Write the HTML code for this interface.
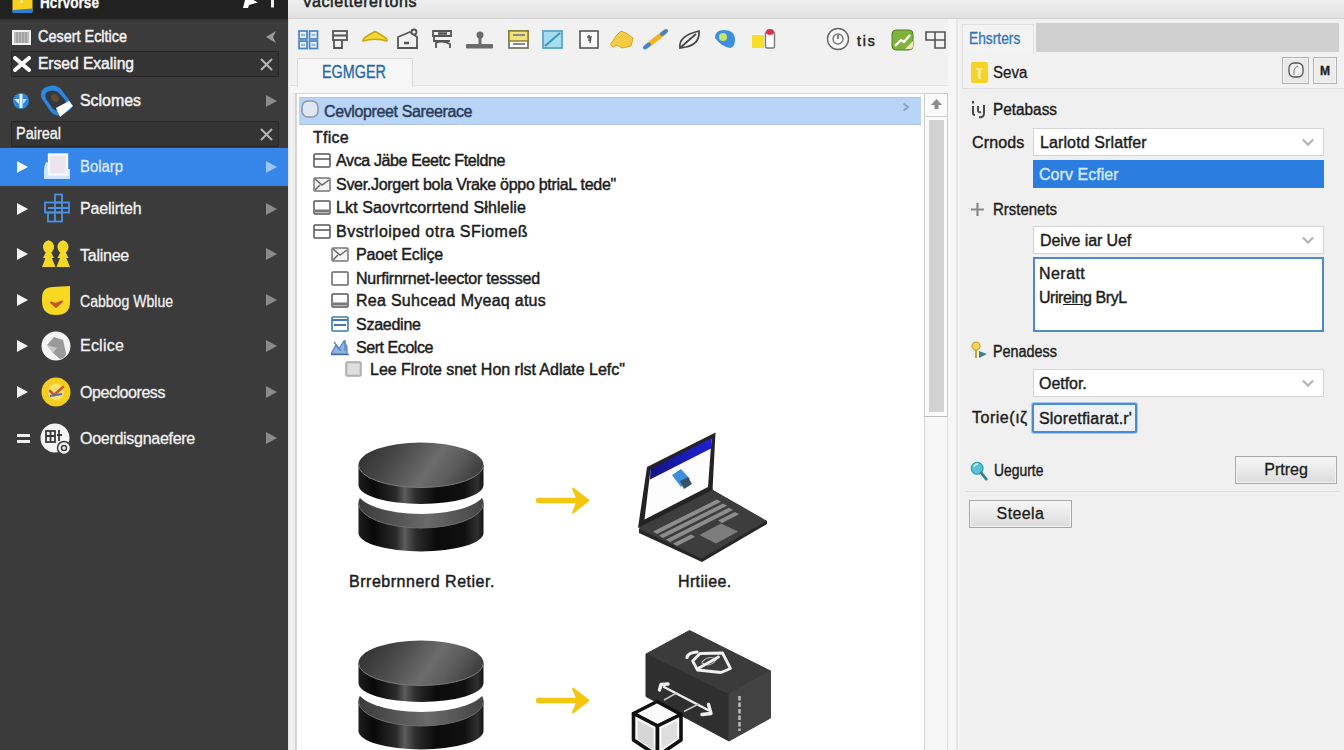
<!DOCTYPE html>
<html lang="en">
<head>
<meta charset="utf-8">
<title>Vacletterertons</title>
<style>
*{box-sizing:border-box;margin:0;padding:0}
html,body{width:1344px;height:750px;overflow:hidden;background:#f0f0f0}
body{font-family:"Liberation Sans",sans-serif;font-size:15px;color:#1a1a1a;position:relative}
.abs{position:absolute}
.t{position:absolute;white-space:nowrap;line-height:20px;height:20px}
/* ---------- sidebar ---------- */
#side{position:absolute;left:0;top:0;width:288px;height:750px;background:#3b3b3b;overflow:hidden}
#side .top{position:absolute;left:0;top:0;width:288px;height:21px;background:linear-gradient(#212121 0,#212121 18px,#3b3b3b 21px)}
#side .t{color:#f2f2f2;font-size:15px}
#side .box{position:absolute;left:11px;width:268px;height:26px;background:#343434;border:1px solid #262626;border-radius:1px}
#side .sel{position:absolute;left:0;top:148px;width:288px;height:38px;background:#3685e9}
.tri{position:absolute;width:0;height:0;border-style:solid;border-width:6px 0 6px 11px;border-color:transparent transparent transparent #8a8a8a}
.tri.w{border-left-color:#f4f4f4}
/* ---------- center ---------- */
#mid{position:absolute;left:288px;top:0;width:670px;height:750px;background:#f1f1f1;overflow:hidden}
#mid .title{position:absolute;left:0;top:0;width:670px;height:18px;background:linear-gradient(#eeeeee,#e1e1e1)}
#panel{position:absolute;left:9px;top:93px;width:629px;height:670px;background:#fff;border:1px solid #d6d6d6;border-left:1px solid #fff}
#panelL{position:absolute;left:7px;top:93px;width:3px;height:670px;background:linear-gradient(90deg,#d0d0d0,#d8d8d8 55%,#f2f2f2);border-top:1px solid #d0d0d0}
.tree .t{font-size:15px;color:#1c1c1c}
.ico{position:absolute;width:17px;height:13px;border:1.5px solid #4a4a4a;border-radius:1px;background:#fff}
.ico:after{content:"";position:absolute;left:0;right:0;top:4px;border-top:1.5px solid #4a4a4a}
/* ---------- right ---------- */
#right{position:absolute;left:958px;top:0;width:386px;height:750px;background:#f0f0f0}
#right .t{font-size:15px;color:#1c1c1c}
.selbox{position:absolute;left:75px;width:291px;height:28px;background:#fff;border:1px solid #d4d4d4}
.chev{position:absolute;right:9px;top:9px;width:12px;height:8px}
.btn{position:absolute;height:28px;border:1px solid #a9a9a9;background:linear-gradient(#f7f7f7,#dcdcdc);text-align:center;line-height:26px;font-size:16px;color:#1c1c1c;-webkit-text-stroke:0.3px #1c1c1c;box-shadow:inset 0 0 0 1px #f4f4f4}
</style>
</head>
<body>

<!-- ================= LEFT SIDEBAR ================= -->
<div id="side">
  <div class="top"></div>
  <!-- top bar: app icon + title -->
  <svg class="abs" style="left:12px;top:0" width="21" height="14" viewBox="0 0 21 14"><rect x="0.5" y="-6" width="20" height="19" rx="2" fill="#f6d21c"/><path d="M0.5 10 L20.5 8.5 L20.5 12 Q20.5 13 19.5 13 L1.5 13 Q0.5 13 0.5 12Z" fill="#2f7fd6"/><rect x="8" y="-2" width="3" height="5" fill="#fbe67a"/></svg>
  <div class="t" style="left:40.0px;top:-7px;font-size:16px;font-weight:bold;color:#fff;letter-spacing:0px;-webkit-text-stroke:0.3px #f2f2f2;transform:scaleX(0.850);transform-origin:0 50%">Hcrvorse</div>
  <svg class="abs" style="left:243px;top:0" width="36" height="12" viewBox="0 0 36 12"><path d="M0 8 L3 -4 L15 2.5 L6 5 L5 8Z" fill="#fff"/><rect x="28" y="-4" width="3" height="11.5" fill="#ededed"/></svg>

  <!-- row: Cesert Ecltice -->
  <svg class="abs" style="left:12px;top:30px" width="19" height="15" viewBox="0 0 19 15"><rect x="1" y="1" width="17" height="13" fill="#bdbdbd" stroke="#f2f2f2" stroke-width="2"/><path d="M5 2V13M8 2V13M11 2V13M14 2V13" stroke="#8a8a8a" stroke-width="1"/></svg>
  <div class="t" style="left:38.0px;top:27px;-webkit-text-stroke:0.5px #f2f2f2;letter-spacing:0px;font-size:16px;transform:scaleX(0.902);transform-origin:0 50%">Cesert Ecltice</div>
  <svg class="abs" style="left:264px;top:30px" width="14" height="14" viewBox="0 0 14 14"><path d="M12 1 L2 7 L12 13 L9 7Z" fill="#9a9a9a"/></svg>

  <!-- boxed row: Ersed Exaling -->
  <div class="box" style="top:51px"></div>
  <svg class="abs" style="left:13px;top:56px" width="18" height="16" viewBox="0 0 18 16"><path d="M2 2 L16 14 M16 2 L2 14" stroke="#fff" stroke-width="4" stroke-linecap="round"/></svg>
  <div class="t" style="left:38.0px;top:54px;-webkit-text-stroke:0.5px #f2f2f2;letter-spacing:0px;font-size:16px;transform:scaleX(0.972);transform-origin:0 50%">Ersed Exaling</div>
  <svg class="abs" style="left:259px;top:57px" width="15" height="15" viewBox="0 0 15 15"><path d="M2 2 L13 13 M13 2 L2 13" stroke="#b5b5b5" stroke-width="2"/></svg>

  <!-- row: Sclomes -->
  <svg class="abs" style="left:11px;top:84px" width="64" height="34" viewBox="0 0 64 34"><circle cx="10" cy="17" r="8" fill="#2d86d9"/><rect x="8.5" y="10" width="3" height="14" fill="#e8f3ff"/><path d="M3 15 L8 15 L8 20Z" fill="#e8f3ff"/><path d="M16 15 L12 15 L12 20Z" fill="#bfe0ff"/>
   <path d="M33 4 Q28 8 31 15 L40 28 Q46 34 53 30 L60 25 Q62 21 59 17 L49 4 Q42 -1 33 4Z" fill="#2d86e0"/><path d="M36 8 Q33 11 35 15 L42 25 Q46 28 50 26 L55 22 Q56 19 54 16 L47 8 Q42 5 36 8Z" fill="#33383f"/><ellipse cx="44" cy="14" rx="4.5" ry="3.5" transform="rotate(38 44 14)" fill="#5e4a36"/><path d="M45 24 L58 17 L62 22 L49 33Z" fill="#fff"/></svg>
  <div class="t" style="left:80.0px;top:91px;-webkit-text-stroke:0.5px #f2f2f2;font-size:16px;letter-spacing:0px;transform:scaleX(0.994);transform-origin:0 50%">Sclomes</div>
  <div class="tri" style="left:266px;top:95px"></div>

  <!-- boxed row: Paireal -->
  <div class="box" style="top:121px"></div>
  <div class="t" style="left:16.0px;top:124px;font-size:16px;letter-spacing:0px;-webkit-text-stroke:0.35px #f2f2f2;transform:scaleX(0.903);transform-origin:0 50%">Paireal</div>
  <svg class="abs" style="left:259px;top:127px" width="15" height="15" viewBox="0 0 15 15"><path d="M2 2 L13 13 M13 2 L2 13" stroke="#b5b5b5" stroke-width="2"/></svg>

  <!-- selected row: Bolarp -->
  <div class="sel"></div>
  <div class="tri w" style="left:17px;top:161px"></div>
  <svg class="abs" style="left:42px;top:152px" width="30" height="30" viewBox="0 0 30 30"><path d="M4 10 Q2 14 2 18 V27 H28 V17 H24" fill="#cfe5ff"/><rect x="7" y="2.5" width="18" height="20" fill="#ece6ec" stroke="#f4f9ff" stroke-width="2.4"/></svg>
  <div class="t" style="left:80.0px;top:157px;color:#dce9fb;font-size:16px;letter-spacing:0px;-webkit-text-stroke:0.3px #dce9fb;transform:scaleX(0.930);transform-origin:0 50%">Bolarp</div>
  <div class="tri" style="left:266px;top:161px;border-left-color:#9cc4f4"></div>

  <!-- row: Paelirteh -->
  <div class="tri w" style="left:17px;top:203px"></div>
  <svg class="abs" style="left:42px;top:193px" width="30" height="32" viewBox="0 0 30 32"><g fill="none" stroke="#4a93e6" stroke-width="1.8"><rect x="13" y="1.5" width="7" height="8"/><rect x="3" y="9.5" width="24" height="10"/><rect x="6" y="19.5" width="14" height="9"/><path d="M13 9.5V28.5M20 9.5V19.5M6 15H27"/></g></svg>
  <div class="t" style="left:80.0px;top:199px;font-size:16px;letter-spacing:-0.18px;-webkit-text-stroke:0.3px #f2f2f2">Paelirteh</div>
  <div class="tri" style="left:266px;top:203px"></div>

  <!-- row: Talinee -->
  <div class="tri w" style="left:17px;top:248px"></div>
  <svg class="abs" style="left:40px;top:240px" width="32" height="30" viewBox="0 0 32 30"><g fill="#f7d826"><ellipse cx="8.5" cy="7" rx="5.5" ry="6.5"/><ellipse cx="23" cy="7" rx="5.5" ry="6.5"/><path d="M8.5 0L12 5H5Z"/><path d="M23 0L26.5 5H19.5Z"/><path d="M8.5 10 L2 27 L15.5 27Z"/><path d="M23 10 L16.5 27 L30 27Z"/><path d="M6 12H11L14 18H3Z"/><path d="M20.5 12H25.5L28.5 18H17.5Z"/></g></svg>
  <div class="t" style="left:80.0px;top:245.5px;font-size:16px;letter-spacing:-0.24px;-webkit-text-stroke:0.3px #f2f2f2">Talinee</div>
  <div class="tri" style="left:266px;top:248px"></div>

  <!-- row: Cabbog Wblue -->
  <div class="tri w" style="left:17px;top:294px"></div>
  <svg class="abs" style="left:41px;top:285px" width="31" height="31" viewBox="0 0 31 31"><path d="M1 13 Q1 2 12 2 L29 1 L29 17 Q29 30 15 30 Q1 30 1 16Z" fill="#f8d820"/><path d="M10 17.5 L15 22 L21 16.5 L15 19Z" fill="#c8542a" stroke="#c8542a" stroke-width="2" stroke-linejoin="round"/></svg>
  <div class="t" style="left:80.0px;top:291.5px;font-size:16px;letter-spacing:0px;-webkit-text-stroke:0.3px #f2f2f2;transform:scaleX(0.879);transform-origin:0 50%">Cabbog Wblue</div>
  <div class="tri" style="left:266px;top:294px"></div>

  <!-- row: Eclice -->
  <div class="tri w" style="left:17px;top:340px"></div>
  <svg class="abs" style="left:41px;top:331px" width="31" height="31" viewBox="0 0 31 31"><circle cx="15" cy="15" r="14.5" fill="#f4f4f4"/><path d="M6 14 L13 6 L22 9 L25 22 Q25 27 19 28 L12 22Z" fill="#9a9a9a"/><path d="M6 14 L12 22 L16 17Z" fill="#c9c9c9"/></svg>
  <div class="t" style="left:80.0px;top:335.5px;font-size:16px;letter-spacing:0.22px;-webkit-text-stroke:0.3px #f2f2f2">Eclice</div>
  <div class="tri" style="left:266px;top:340px"></div>

  <!-- row: Opeclooress -->
  <div class="tri w" style="left:17px;top:386px"></div>
  <svg class="abs" style="left:41px;top:377px" width="31" height="31" viewBox="0 0 31 31"><circle cx="15" cy="15" r="14.5" fill="#f4cf1f"/><circle cx="15" cy="15" r="8" fill="#f9e173"/><path d="M9 14 L13 18 L22 10" fill="none" stroke="#d4552f" stroke-width="2.6" stroke-linecap="round"/><path d="M9 19 L21 17" stroke="#5b6fb0" stroke-width="2.2"/></svg>
  <div class="t" style="left:80.0px;top:382.5px;font-size:16px;letter-spacing:-0.44px;-webkit-text-stroke:0.3px #f2f2f2">Opeclooress</div>
  <div class="tri" style="left:266px;top:386px"></div>

  <!-- row: Ooerdisgnaefere -->
  <div class="abs" style="left:17px;top:434px;width:13px;height:3px;background:#f2f2f2"></div>
  <div class="abs" style="left:17px;top:440px;width:13px;height:3px;background:#f2f2f2"></div>
  <svg class="abs" style="left:40px;top:422px" width="34" height="36" viewBox="0 0 34 36"><circle cx="15" cy="16" r="14.5" fill="#f4f4f4"/><g fill="none" stroke="#3a3a3a" stroke-width="1.8"><rect x="6" y="9" width="9" height="11"/><path d="M6 14H15M10.5 9V20M19 8V19M17 13H22"/></g><circle cx="24" cy="26" r="6.5" fill="#f4f4f4" stroke="#3c3c3c" stroke-width="1.5"/><circle cx="24" cy="26" r="2.5" fill="none" stroke="#3a3a3a" stroke-width="1.5"/></svg>
  <div class="t" style="left:80.0px;top:428.5px;font-size:16px;letter-spacing:-0.28px;-webkit-text-stroke:0.3px #f2f2f2">Ooerdisgnaefere</div>
  <div class="tri" style="left:266px;top:432px"></div>
</div>

<!-- ================= CENTER ================= -->
<div id="mid">
  <div class="title"></div>
  <div class="abs" style="left:0;top:18px;width:670px;height:1px;background:#d2d2d2"></div>
  <div class="abs" style="left:0;top:19px;width:1px;height:731px;background:#e4e4e4"></div>
  <div class="t" style="left:14.0px;top:-8px;font-size:16px;letter-spacing:0.57px;color:#222;-webkit-text-stroke:0.5px #222">Vacletterertons</div>

  <!-- toolbar icons (coordinates relative to #mid: x-288) -->
  <svg class="abs" style="left:0;top:24px" width="670" height="32" viewBox="288 24 670 32">
    <!-- 1 grid -->
    <g fill="#e6eff9" stroke="#4785c6" stroke-width="1.7"><rect x="299" y="31" width="8" height="8"/><rect x="309.5" y="31" width="8" height="8"/><rect x="299" y="41" width="8" height="7.5"/><rect x="309.5" y="41" width="8" height="7.5"/></g><path d="M301 35h4M311.5 35h4M301 45h4M311.5 45h4" stroke="#7aa6d6" stroke-width="1.5"/>
    <!-- 2 list -->
    <g fill="none" stroke="#555" stroke-width="1.8"><rect x="333" y="31" width="14" height="9"/><path d="M333 35.5H347M334 40V48H342V40"/></g>
    <!-- 3 yellow hat -->
    <path d="M363 41 Q362 38 375 31.5 Q388 38 387 41 Q375 37.5 363 41Z" fill="#f6d82e" stroke="#c8a616" stroke-width="1.6" stroke-linejoin="round"/>
    <!-- 4 house -->
    <g fill="none" stroke="#555" stroke-width="1.8"><path d="M398 48V37L410 32L417 37V48Z"/><circle cx="414" cy="32" r="2.5" fill="#f1f1f1"/><path d="M404 43H409" stroke-width="2.5"/></g>
    <!-- 5 building -->
    <g fill="none" stroke="#555" stroke-width="1.8"><path d="M433 36V31H451V36ZM434 36V41H450M436 48V43Q442 40 450 44V48"/><path d="M438 33.5H447" stroke-width="2.5"/></g>
    <!-- 6 stamp -->
    <g fill="#6a6a6a"><circle cx="480" cy="35" r="3.5"/><rect x="478.5" y="36" width="3" height="8"/><rect x="466" y="44" width="27" height="4.5" rx="1"/></g>
    <!-- 7 yellow table -->
    <g><rect x="509" y="31" width="19" height="17" fill="#fff" stroke="#6a6a55" stroke-width="1.6"/><rect x="509" y="31" width="19" height="10" fill="#f3e27a" stroke="#8a7d2a" stroke-width="1.4"/><path d="M513 35H525M513 44H525" stroke="#8a8a8a" stroke-width="2"/></g>
    <!-- 8 cyan square -->
    <g><rect x="543" y="31" width="19" height="17" fill="#a6def0" stroke="#5aa7c4" stroke-width="1.8"/><path d="M545 46L560 33" stroke="#3d93b5" stroke-width="2"/></g>
    <!-- 9 small box -->
    <g><rect x="580" y="31" width="18" height="17" fill="#fafafa" stroke="#555" stroke-width="1.6"/><path d="M587 37h4l-1 6M589 35v6" stroke="#555" stroke-width="1.4" fill="none"/></g>
    <!-- 10 yellow blob -->
    <path d="M612 42 Q609 45 613 47 L617 45 L622 48 L631 46 L633 38 L626 33 L621 31 L616 36Z" fill="#f6cc45" stroke="#d9a520" stroke-width="1"/>
    <!-- 11 pen -->
    <g><path d="M647 46L665 32" stroke="#f0b429" stroke-width="5" stroke-linecap="round"/><path d="M645 47.5L649 44.5" stroke="#3e86c9" stroke-width="4" stroke-linecap="round"/><path d="M662 34L666 31" stroke="#3e86c9" stroke-width="4" stroke-linecap="round"/></g>
    <!-- 12 leaf -->
    <g fill="none" stroke="#444" stroke-width="1.7"><path d="M680 48 Q678 36 699 31 Q700 44 686 47Z"/><path d="M681 47L696 34"/></g>
    <!-- 13 blue teardrop -->
    <path d="M715 38 Q715 30 724 30 Q735 30 735 40 Q735 47 730 48 Q722 47 715 38Z" fill="#3f8fe0"/><circle cx="723" cy="37" r="4" fill="#c8e46a"/>
    <!-- 14 yellow + phone -->
    <rect x="752" y="35" width="12" height="13" fill="#f8de26"/><rect x="765.5" y="32" width="9" height="16" rx="1.5" fill="#fff" stroke="#777" stroke-width="1.4"/><ellipse cx="770" cy="32" rx="4" ry="3" fill="#d8334a"/>
    <!-- 15 clock -->
    <circle cx="838" cy="39" r="10.5" fill="#f7f7f7" stroke="#666" stroke-width="1.4"/><circle cx="838" cy="39" r="5" fill="none" stroke="#777" stroke-width="1.4"/><path d="M838 39V35" stroke="#555" stroke-width="1.4"/>
    <!-- 17 green -->
    <rect x="892" y="30" width="21" height="20" rx="4" fill="#7fb23a" stroke="#55802a" stroke-width="1"/><path d="M895 46 L901 40 L904 42 L910 35" stroke="#fff" stroke-width="2.4" fill="none"/><path d="M905 49 L913 41 V46 Q913 49 910 49Z" fill="#f0e9c0"/>
    <!-- 18 window grid -->
    <g fill="none" stroke="#555" stroke-width="1.6"><path d="M926 32H945V48H935V40H926Z"/><path d="M935 32V40H945"/></g>
  </svg>
  <div class="t" style="left:569.0px;top:30.5px;font-size:14px;color:#222;-webkit-text-stroke:0.5px #222;letter-spacing:1.9px">tis</div>

  <!-- tab strip -->
  <div class="abs" style="left:2px;top:85px;width:658px;height:1px;background:#e2e2e2"></div>
  <div class="abs" style="left:2px;top:86px;width:658px;height:7px;background:#f6f6f6"></div>
  <div class="abs" style="left:9px;top:58px;width:116px;height:29px;background:#f6f6f6;border:1px solid #dadada;border-bottom:none"></div>
  <div class="t" style="left:34px;top:62px;font-size:18px;color:#2567ab;-webkit-text-stroke:0.3px #2567ab;transform:scaleX(0.8);transform-origin:0 0">EGMGER</div>

  <!-- white content panel -->
  <div id="panelL"></div>
  <div id="panel">
    <!-- selected header row -->
    <div class="abs" style="left:1px;top:3px;width:622px;height:28px;background:#b8d4f6;border-top:1px solid #aec4e2;border-bottom:1px solid #aec4e2"></div>
    <svg class="abs" style="left:3px;top:6px" width="18" height="18" viewBox="0 0 18 18"><rect x="1" y="1" width="16" height="16" rx="6" fill="#dfe7f1" stroke="#8d97a6" stroke-width="1.5"/></svg>
    <div class="t" style="left:26.0px;top:7.5px;font-size:16px;color:#2b3c58;letter-spacing:-0.38px;-webkit-text-stroke:0.45px #2b3c58">Cevlopreet Sareerace</div>
    <svg class="abs" style="left:604px;top:8px" width="8" height="10" viewBox="0 0 8 10"><path d="M1.5 1.5L6 5L1.5 8.5" fill="none" stroke="#86a0c2" stroke-width="1.8"/></svg>
    <div class="tree">
      <div class="t" style="left:15.0px;top:34px;font-size:16px;letter-spacing:0.26px;-webkit-text-stroke:0.45px #1c1c1c">Tfice</div>
      <svg class="abs" style="left:15px;top:59px" width="18" height="15" viewBox="0 0 18 15"><rect x="1" y="1" width="16" height="13" rx="1" fill="#fff" stroke="#555" stroke-width="1.5"/><path d="M1 6H17" stroke="#555" stroke-width="1.5"/></svg>
      <div class="t" style="left:38.0px;top:57px;font-size:16px;letter-spacing:-0.37px;-webkit-text-stroke:0.45px #1c1c1c">Avca Jäbe Eeetc Fteldne</div>
      <svg class="abs" style="left:15px;top:83px" width="18" height="15" viewBox="0 0 18 15"><rect x="1" y="1" width="16" height="13" rx="1" fill="#f4f4f4" stroke="#777" stroke-width="1.5"/><path d="M2 2L9 8L16 3M2 13L7 8" fill="none" stroke="#666" stroke-width="1.5"/></svg>
      <div class="t" style="left:38.0px;top:81px;font-size:16px;letter-spacing:-0.29px;-webkit-text-stroke:0.45px #1c1c1c">Sver.Jorgert bola Vrake öppo þtriaL tede"</div>
      <svg class="abs" style="left:15px;top:106px" width="18" height="15" viewBox="0 0 18 15"><rect x="1" y="1" width="16" height="13" rx="1" fill="#fff" stroke="#555" stroke-width="1.5"/><path d="M2 11H16" stroke="#777" stroke-width="3"/></svg>
      <div class="t" style="left:38.0px;top:104px;font-size:16px;letter-spacing:0.12px;-webkit-text-stroke:0.45px #1c1c1c">Lkt Saovrtcorrtend Słhlelie</div>
      <svg class="abs" style="left:15px;top:130px" width="18" height="15" viewBox="0 0 18 15"><rect x="1" y="1" width="16" height="13" rx="1" fill="#fff" stroke="#555" stroke-width="1.5"/><path d="M1 6H17" stroke="#555" stroke-width="1.5"/></svg>
      <div class="t" style="left:38.0px;top:128px;font-size:16px;letter-spacing:0.48px;-webkit-text-stroke:0.45px #1c1c1c">Bvstrloiped otra SFiomeß</div>
      <svg class="abs" style="left:33px;top:153px" width="18" height="15" viewBox="0 0 18 15"><rect x="1" y="1" width="16" height="13" rx="1" fill="#f4f4f4" stroke="#777" stroke-width="1.5"/><path d="M2 2L9 8L16 3M2 13L7 8" fill="none" stroke="#666" stroke-width="1.5"/></svg>
      <div class="t" style="left:58.0px;top:151px;font-size:16px;letter-spacing:-0.16px;-webkit-text-stroke:0.45px #1c1c1c">Paoet Ecliçe</div>
      <svg class="abs" style="left:33px;top:177px" width="18" height="15" viewBox="0 0 18 15"><rect x="1" y="1" width="16" height="13" rx="1" fill="#fff" stroke="#666" stroke-width="1.5"/></svg>
      <div class="t" style="left:58.0px;top:175px;font-size:16px;letter-spacing:-0.20px;-webkit-text-stroke:0.45px #1c1c1c">Nurfirnrnet-Ieector tesssed</div>
      <svg class="abs" style="left:33px;top:199px" width="18" height="15" viewBox="0 0 18 15"><rect x="1" y="1" width="16" height="13" rx="1" fill="#fff" stroke="#555" stroke-width="1.5"/><path d="M2 11H16" stroke="#777" stroke-width="3"/></svg>
      <div class="t" style="left:58.0px;top:197px;font-size:16px;letter-spacing:0.27px;-webkit-text-stroke:0.45px #1c1c1c">Rea Suhcead Myeaq atus</div>
      <svg class="abs" style="left:33px;top:222px" width="18" height="17" viewBox="0 0 18 17"><rect x="1" y="1" width="16" height="14" rx="1" fill="#fff" stroke="#3f78b5" stroke-width="1.6"/><path d="M1 4H17M3 9H15" stroke="#3f78b5" stroke-width="2"/></svg>
      <div class="t" style="left:58.0px;top:221px;font-size:16px;letter-spacing:-0.25px;-webkit-text-stroke:0.45px #1c1c1c">Szaedine</div>
      <svg class="abs" style="left:33px;top:245px" width="18" height="17" viewBox="0 0 18 17"><path d="M0 15L5 6L8 10L13 2L16 8V15Z" fill="#8eb4e3" stroke="#4a7dc0" stroke-width="1.2"/><path d="M3 3L10 12M14 1V12" stroke="#5a86c0" stroke-width="1.3"/><path d="M0 15.5H18" stroke="#4a6fa5" stroke-width="1.5"/></svg>
      <div class="t" style="left:58.0px;top:244px;font-size:16px;letter-spacing:-0.44px;-webkit-text-stroke:0.45px #1c1c1c">Sert Ecolce</div>
      <svg class="abs" style="left:47px;top:267px" width="18" height="17" viewBox="0 0 18 17"><rect x="1" y="1" width="15" height="14" rx="1.5" fill="#d0d0d0" stroke="#a8a8a8" stroke-width="1.5"/><rect x="3" y="3" width="11" height="10" fill="#dedede"/></svg>
      <div class="t" style="left:72.0px;top:266px;font-size:16px;letter-spacing:-0.02px;-webkit-text-stroke:0.45px #1c1c1c">Lee Flrote snet Hon rlst Adlate Lefc"</div>
    </div>
    <!-- illustrations -->
    <svg class="abs" style="left:0;top:0" width="627" height="656" viewBox="298 94 627 656">
      <defs>
        <linearGradient id="gtop" x1="0" y1="0.2" x2="1" y2="0.45">
          <stop offset="0" stop-color="#303030"/><stop offset="0.3" stop-color="#484848"/><stop offset="0.62" stop-color="#6c6c6c"/><stop offset="0.8" stop-color="#5c5c5c"/><stop offset="1" stop-color="#404040"/>
        </linearGradient>
        <linearGradient id="gtop2" x1="0" y1="0" x2="1" y2="0">
          <stop offset="0" stop-color="#3a3a3a"/><stop offset="0.55" stop-color="#6a6a6a"/><stop offset="1" stop-color="#444"/>
        </linearGradient>
        <linearGradient id="gside" x1="0" y1="0" x2="1" y2="0">
          <stop offset="0" stop-color="#1e1e1e"/><stop offset="0.12" stop-color="#080808"/><stop offset="0.3" stop-color="#2a2a2a"/><stop offset="0.37" stop-color="#5c5c5c"/><stop offset="0.46" stop-color="#2c2c2c"/><stop offset="0.62" stop-color="#0b0b0b"/><stop offset="0.85" stop-color="#101010"/><stop offset="0.95" stop-color="#303030"/><stop offset="1" stop-color="#141414"/>
        </linearGradient>
        <linearGradient id="gblue" x1="0" y1="0" x2="1" y2="0"><stop offset="0" stop-color="#14147e"/><stop offset="0.5" stop-color="#1a1ab4"/><stop offset="1" stop-color="#2020d0"/></linearGradient>
      </defs>
      <!-- database cylinders -->
      <g transform="translate(0 0)">
        <path d="M358.5 503 V533 A62.5 18.5 0 0 0 483.5 533 V503Z" fill="url(#gside)"/>
        <ellipse cx="421" cy="503" rx="62.5" ry="25" fill="url(#gtop2)"/>
        <path d="M358.5 503 A62.5 25 0 0 0 483.5 503" fill="none" stroke="#6e6e6e" stroke-width="1"/>
        <ellipse cx="421" cy="491" rx="64" ry="23" fill="#fff"/>
        <path d="M358.5 465 V485 A62.5 19 0 0 0 483.5 485 V465Z" fill="url(#gside)"/>
        <ellipse cx="421" cy="465" rx="62.5" ry="22.5" fill="url(#gtop)"/>
        <path d="M358.5 465 A62.5 22.5 0 0 0 483.5 465" fill="none" stroke="#7a7a7a" stroke-width="1"/>
      </g>
      <g transform="translate(0 198)">
        <path d="M358.5 503 V533 A62.5 18.5 0 0 0 483.5 533 V503Z" fill="url(#gside)"/>
        <ellipse cx="421" cy="503" rx="62.5" ry="25" fill="url(#gtop2)"/>
        <path d="M358.5 503 A62.5 25 0 0 0 483.5 503" fill="none" stroke="#6e6e6e" stroke-width="1"/>
        <ellipse cx="421" cy="491" rx="64" ry="23" fill="#fff"/>
        <path d="M358.5 465 V485 A62.5 19 0 0 0 483.5 485 V465Z" fill="url(#gside)"/>
        <ellipse cx="421" cy="465" rx="62.5" ry="22.5" fill="url(#gtop)"/>
        <path d="M358.5 465 A62.5 22.5 0 0 0 483.5 465" fill="none" stroke="#7a7a7a" stroke-width="1"/>
      </g>
      <!-- yellow arrows -->
      <g fill="#f5c60f" stroke="#f5c60f" stroke-linecap="round" stroke-linejoin="round">
        <path d="M538.5 500.5H578" stroke-width="5.5" fill="none"/><path d="M573 488.5L588.5 500.5L573 512.5L578 500.5Z" stroke-width="2"/>
        <path d="M538.5 700.5H578" stroke-width="5.5" fill="none"/><path d="M573 688.5L588.5 700.5L573 712.5L578 700.5Z" stroke-width="2"/>
      </g>
      <!-- laptop -->
      <g>
        <path d="M639 529 L713 490 L767 521 L767 524 L702 562 L639 533Z" fill="#262626"/>
        <path d="M639.5 529 L639 525 L712 487 L713 490.5 L766.5 521 L701.5 558.5Z" fill="#3d3d3d"/>
        <g fill="#8d8d8d">
          <path d="M653 531.5 L717 499.5 L721 501.8 L657 534Z"/>
          <path d="M659 535.5 L723 503.5 L727 505.8 L663 538Z"/>
          <path d="M666 539.5 L729 507.7 L733 510 L670 542Z"/>
          <path d="M673 543.5 L691 534.5 L695 536.8 L677 546Z"/>
          <path d="M718 520.5 L735 512 L739 514.3 L722 523Z"/>
        </g>
        <path d="M699.5 535 L721 523.5 L738 531.5 L716 543.5Z" fill="#7d7d7d"/>
        <path d="M647 467 L715.5 432.5 L712.5 490 L638 528Z" fill="#232323"/>
        <path d="M650.5 470 L711.5 439 L708 487 L644.5 519.5Z" fill="#fdfdfd"/>
        <path d="M650.5 469 L711.5 438 L711 448.5 L650 479.5Z" fill="url(#gblue)"/>
        <path d="M672 475 L681 469 L690 479 L681 487Z" fill="#3b8fe0"/>
        <path d="M680 481 L688 477 L692 484 L684 489Z" fill="#35506b"/>
      </g>
      <!-- big dark box -->
      <g>
        <path d="M689.5 630.5 L770.5 671 L729 694.5 L646 654Z" fill="#3b3b3b" stroke="#3b3b3b" stroke-width="1" stroke-linejoin="round"/>
        <path d="M646 654 L729 694.5 L729 741 L646 696.5Z" fill="#2f2f2f" stroke="#2f2f2f" stroke-width="1" stroke-linejoin="round"/>
        <path d="M729 694.5 L770.5 671 L770.5 718 L729 741Z" fill="#424242" stroke="#424242" stroke-width="1" stroke-linejoin="round"/>
        <g fill="none" stroke="#f2f2f2" stroke-width="2.8" stroke-linejoin="round" stroke-linecap="round">
          <path d="M692.7 661 L700 653.5 L722.5 653 L730.5 668.5 L721 672.5 L697.5 670Z"/>
          <path d="M702 662 Q709 655 716 659 M702 663 Q710 668 716 660" stroke-width="1.1" stroke="#bdbdbd"/>
          <path d="M699 668 L718.5 657" stroke-width="2.8"/>
          <path d="M687 657.5 Q688 652.5 697 652" stroke-width="3.2"/>
        </g>
        <g stroke="#efefef" stroke-width="2.4" fill="none" stroke-linecap="round" stroke-linejoin="round">
          <path d="M664 687 L708 710"/>
          <path d="M659.5 690 L661 684.5 L668 684" stroke-width="3.4"/>
          <path d="M702 714.5 L711 713.5 L708.5 704.5" stroke-width="3.4"/>
        </g>
        <path d="M664 700 L677.5 692.5 M684 711.5 L698.5 704" stroke="#c4c4c4" stroke-width="1.5"/>
        <path d="M739.5 696 V731" stroke="#b8b8b8" stroke-width="2.6" stroke-dasharray="4.5 2"/>
      </g>
      <!-- small white cube -->
      <g stroke="#111" stroke-width="3.6" stroke-linejoin="round">
        <path d="M657 701.5 L681 714.5 L657.5 726 L633.5 713.5Z" fill="#fbfbfb"/>
        <path d="M633.5 713.5 L657.5 726 L657.5 756 L633.5 740Z" fill="#fafafa"/>
        <path d="M657.5 726 L681 714.5 L681 740 L657.5 756Z" fill="#fafafa"/>
      </g>
      <path d="M637.5 720 L653.5 728.5 L653.5 750 L637.5 739Z" fill="#d6d6d6"/>
      <path d="M661.5 728.5 L677 721 L677 738.5 L661.5 749Z" fill="#dedede"/>
    </svg>
    <div class="t" style="left:51.0px;top:478px;font-size:16px;-webkit-text-stroke:0.45px #1c1c1c;color:#1c1c1c;letter-spacing:0.52px">Brrebrnnerd Retier.</div>
    <div class="t" style="left:380.0px;top:478px;font-size:16px;-webkit-text-stroke:0.45px #1c1c1c;color:#1c1c1c;letter-spacing:0.35px">Hrtiiee.</div>
  </div>
  <!-- vertical scrollbar -->
  <div class="abs" style="left:636px;top:93px;width:24px;height:660px;background:#f7f7f7;border-left:1px solid #d6d6d6;border-right:1px solid #e0e0e0"></div>
  <div class="abs" style="left:636px;top:93px;width:24px;height:324px;background:#fafafa;border:1px solid #cdcdcd;border-bottom-color:#bdbdbd"></div>
  <div class="abs" style="left:638px;top:116px;width:21px;height:1px;background:#cfcfcf"></div>
  <svg class="abs" style="left:642px;top:98px" width="13" height="13" viewBox="0 0 13 13"><path d="M6.5 1L12 7H8.5V11H4.5V7H1Z" fill="#8c8c8c"/></svg>
  <div class="abs" style="left:641px;top:120px;width:15px;height:292px;background:#d2d2d2"></div>
</div>

<!-- ================= RIGHT ================= -->
<div id="right">
  <div class="abs" style="left:0;top:0;width:386px;height:18px;background:linear-gradient(#eeeeee,#e1e1e1)"></div>
  <div class="abs" style="left:0;top:18px;width:386px;height:1px;background:#d2d2d2"></div>
  <div class="abs" style="left:-10px;top:19px;width:8px;height:731px;background:#f6f6f6"></div>
  <div class="abs" style="left:-2px;top:19px;width:2px;height:731px;background:#e6e6e6"></div>
  <div class="abs" style="left:0px;top:19px;width:2px;height:731px;background:#f5f5f5"></div>

  <!-- tab + gray strip -->
  <div class="abs" style="left:4px;top:24px;width:382px;height:64px;border-left:1px solid #e0e0e0;background:#f2f2f2"></div>
  <div class="abs" style="left:78px;top:23px;width:303px;height:29px;background:#d0d0d0"></div>
  <div class="abs" style="left:4px;top:24px;width:72px;height:29px;border:1px solid #e0e0e0;border-bottom:none;background:#f3f3f3"></div>
  <div class="t" style="left:10.7px;top:29px;color:#2f74bd;-webkit-text-stroke:0.3px #2f74bd;font-size:16px;letter-spacing:0px;transform:scaleX(0.861);transform-origin:0 50%">Ehsrters</div>

  <!-- Seva row -->
  <svg class="abs" style="left:13px;top:62px" width="17" height="21" viewBox="0 0 17 21"><rect x="0" y="0" width="17" height="21" rx="2" fill="#f7d424"/><path d="M5 6H12V8H10V17H7V8H5Z" fill="#fbe98a"/></svg>
  <div class="t" style="left:34.7px;top:63px;-webkit-text-stroke:0.3px #1c1c1c;font-size:16px;letter-spacing:0px;transform:scaleX(0.941);transform-origin:0 50%">Seva</div>
  <div class="btn" style="left:324px;top:57px;width:27px;height:27px;border-color:#b4b4b4;background:#e9e9e9"></div>
  <svg class="abs" style="left:329px;top:61px" width="18" height="18" viewBox="0 0 18 18"><rect x="2" y="2" width="14" height="14" rx="5" fill="#f1f1f1" stroke="#555" stroke-width="1.3"/><path d="M7 14V9Q8 6 11 5" fill="none" stroke="#777" stroke-width="1"/></svg>
  <div class="btn" style="left:355px;top:57px;width:24px;height:27px;border-color:#b4b4b4;background:#ececec;font-size:12px;font-weight:bold;line-height:27px">M</div>
  <div class="abs" style="left:4px;top:88px;width:382px;height:1px;background:#dedede"></div>

  <!-- Petabass -->
  <svg class="abs" style="left:12px;top:100px" width="17" height="19" viewBox="0 0 17 19"><g fill="none" stroke="#4a4a4a" stroke-width="2"><path d="M3 1V3.5M3 6V13Q3 15 5 15"/><path d="M8 6V10Q8 13 11 12M14 5V13Q14 18 9 17"/></g></svg>
  <div class="t" style="left:35.0px;top:100px;font-size:16px;letter-spacing:0px;-webkit-text-stroke:0.4px #1c1c1c;transform:scaleX(0.959);transform-origin:0 50%">Petabass</div>

  <div class="t" style="left:14.0px;top:133px;font-size:16px;letter-spacing:0.15px;-webkit-text-stroke:0.4px #1c1c1c">Crnods</div>
  <div class="selbox" style="top:128px"><div class="t" style="left:6.0px;top:4px;font-size:16px;letter-spacing:0.11px;-webkit-text-stroke:0.4px #1c1c1c">Larlotd Srlatfer</div><svg class="chev" viewBox="0 0 14 8"><path d="M1 1L7 7L13 1" fill="none" stroke="#b4b4b4" stroke-width="2.6"/></svg></div>
  <div class="abs" style="left:75px;top:160px;width:291px;height:28px;background:#2b7ddf"></div>
  <div class="t" style="left:81.0px;top:165px;color:#d6e8fc;font-size:16px;letter-spacing:0.05px;-webkit-text-stroke:0.4px #d6e8fc">Corv Ecfier</div>

  <!-- Rrstenets -->
  <svg class="abs" style="left:12px;top:202px" width="15" height="15" viewBox="0 0 15 15"><path d="M7.5 1V14M1 7.5H14" stroke="#8a8a8a" stroke-width="2.2"/></svg>
  <div class="t" style="left:35.0px;top:200px;font-size:16px;letter-spacing:0px;-webkit-text-stroke:0.4px #1c1c1c;transform:scaleX(0.935);transform-origin:0 50%">Rrstenets</div>
  <div class="selbox" style="top:226px"><div class="t" style="left:6.0px;top:4px;font-size:16px;letter-spacing:-0.11px;-webkit-text-stroke:0.4px #1c1c1c">Deive iar Uef</div><svg class="chev" viewBox="0 0 14 8"><path d="M1 1L7 7L13 1" fill="none" stroke="#b4b4b4" stroke-width="2.6"/></svg></div>
  <div class="abs" style="left:75px;top:257px;width:291px;height:75px;background:#fff;border:2px solid #4a8bcf"></div>
  <div class="t" style="left:81.0px;top:264px;font-size:16px;letter-spacing:0.45px;-webkit-text-stroke:0.4px #1c1c1c">Neratt</div>
  <div class="t" style="left:81.0px;top:288px;font-size:16px;letter-spacing:-0.44px;-webkit-text-stroke:0.4px #1c1c1c">Urir<u>eing</u> BryL</div>

  <!-- Penadess -->
  <svg class="abs" style="left:12px;top:341px" width="19" height="19" viewBox="0 0 19 19"><circle cx="6" cy="5" r="4" fill="#f3d35a" stroke="#c9a52d" stroke-width="1.2"/><path d="M6 9V17" stroke="#c9a52d" stroke-width="2"/><path d="M9 10L17 13L9 17Z" fill="#4a7d8c"/></svg>
  <div class="t" style="left:35.0px;top:342px;font-size:16px;letter-spacing:0px;-webkit-text-stroke:0.4px #1c1c1c;transform:scaleX(0.899);transform-origin:0 50%">Penadess</div>
  <div class="selbox" style="top:369px"><div class="t" style="left:5.0px;top:4px;font-size:16px;letter-spacing:-0.05px;-webkit-text-stroke:0.4px #1c1c1c">Oetfor.</div><svg class="chev" viewBox="0 0 14 8"><path d="M1 1L7 7L13 1" fill="none" stroke="#b4b4b4" stroke-width="2.6"/></svg></div>

  <div class="t" style="left:14.0px;top:408px;font-size:16px;letter-spacing:0.52px;-webkit-text-stroke:0.4px #1c1c1c">Torie(ıζ</div>
  <div class="abs" style="left:74px;top:403px;width:105px;height:30px;background:#eef1f6;border:2px solid #4a8cd4;border-radius:2px;box-shadow:0 0 0 1px #a9c6e8"></div>
  <div class="t" style="left:81.0px;top:409px;letter-spacing:0.19px;font-size:16px;-webkit-text-stroke:0.4px #1c1c1c">Sloretfiarat.r'</div>

  <!-- Uegurte -->
  <svg class="abs" style="left:12px;top:461px" width="18" height="20" viewBox="0 0 20 22"><circle cx="8" cy="8" r="6.5" fill="#5cc3d6" stroke="#2e9db5" stroke-width="1.4"/><path d="M4 6Q6 3 9 3" stroke="#d8f4fa" stroke-width="1.6" fill="none"/><path d="M12.5 13L18 20" stroke="#2f7f99" stroke-width="3" stroke-linecap="round"/></svg>
  <div class="t" style="left:36.3px;top:461px;font-size:16px;letter-spacing:0px;-webkit-text-stroke:0.4px #1c1c1c;transform:scaleX(0.868);transform-origin:0 50%">Uegurte</div>
  <div class="btn" style="left:277px;top:456px;width:102px">Prtreg</div>
  <div class="abs" style="left:8px;top:491px;width:374px;height:1px;background:#dcdcdc"></div>
  <div class="btn" style="left:11px;top:500px;width:103px;letter-spacing:0.4px">Steela</div>
</div>

</body>
</html>
